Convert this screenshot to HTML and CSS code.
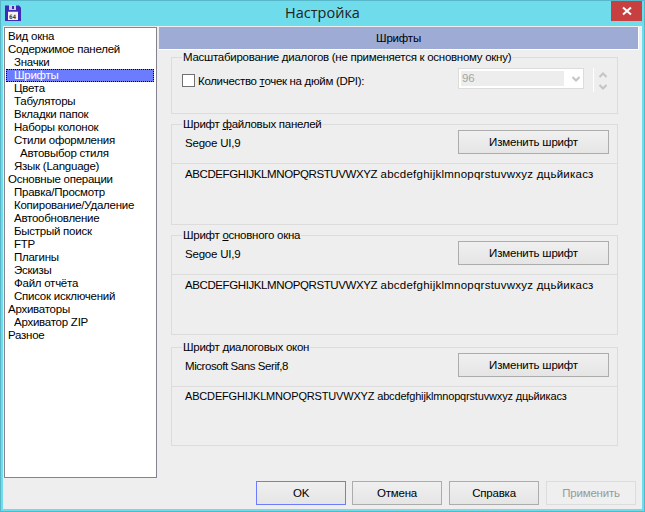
FILE: index.html
```html
<!DOCTYPE html>
<html lang="ru">
<head>
<meta charset="utf-8">
<title>Настройка</title>
<link rel="stylesheet" href="styles.css">
</head>
<body>
<div class="window">
  <div class="titlebar">
    <svg class="appicon" width="16" height="16" viewBox="0 0 16 16">
      <path d="M0 0.5h14l2 2v13.500h-16z" fill="#3d2bb8"/>
      <rect x="4" y="0" width="7" height="5" fill="#c9cbe0"/>
      <rect x="7" y="1" width="2" height="3" fill="#3d2bb8"/>
      <rect x="3" y="6" width="10" height="9" fill="#f4f4f4"/>
      <rect x="3" y="6" width="10" height="1" fill="#b9554e"/>
      <text x="4" y="13.500" class="icontext">64</text>
    </svg>
    <div class="title">Настройка</div>
    <div class="close">
      <svg width="10" height="10" viewBox="0 0 10 10"><path d="M1 1.500l8 7M9 1.500l-8 7" stroke="#fff" stroke-width="2"/></svg>
    </div>
  </div>
  <div class="client">
    <div class="main">
      <ul class="tree">
        <li>Вид окна</li>
        <li>Содержимое панелей</li>
        <li class="l1">Значки</li>
        <li class="l1 sel">Шрифты</li>
        <li class="l1">Цвета</li>
        <li class="l1">Табуляторы</li>
        <li class="l1">Вкладки папок</li>
        <li class="l1">Наборы колонок</li>
        <li class="l1">Стили оформления</li>
        <li class="l2">Автовыбор стиля</li>
        <li class="l1">Язык (Language)</li>
        <li>Основные операции</li>
        <li class="l1">Правка/Просмотр</li>
        <li class="l1">Копирование/Удаление</li>
        <li class="l1">Автообновление</li>
        <li class="l1">Быстрый поиск</li>
        <li class="l1">FTP</li>
        <li class="l1">Плагины</li>
        <li class="l1">Эскизы</li>
        <li class="l1">Файл отчёта</li>
        <li class="l1">Список исключений</li>
        <li>Архиваторы</li>
        <li class="l1">Архиватор ZIP</li>
        <li>Разное</li>
      </ul>
      <div class="panel">
        <div class="header">Шрифты</div>
        <div class="groups">
          <fieldset class="group scale">
            <legend>Масштабирование диалогов (не применяется к основному окну)</legend>
            <div class="dpi">
              <label class="check"><span class="box"></span><span>Количество <u>т</u>очек на дюйм (DPI):</span></label>
              <div class="combo">
                <div class="combo-value">96</div>
                <svg class="chev" width="8" height="6" viewBox="0 0 8 6"><path d="M0.500 1l3.500 3.500L7.500 1" fill="none" stroke="#c4c4c4" stroke-width="2"/></svg>
              </div>
              <div class="spin">
                <svg width="8" height="6" viewBox="0 0 8 6"><path d="M0.500 5l3.500-3.500L7.500 5" fill="none" stroke="#c4c4c4" stroke-width="2"/></svg>
                <svg width="8" height="6" viewBox="0 0 8 6"><path d="M0.500 1l3.500 3.500L7.500 1" fill="none" stroke="#c4c4c4" stroke-width="2"/></svg>
              </div>
            </div>
          </fieldset>
          <fieldset class="group font-a">
            <legend>Шрифт <u>ф</u>айловых панелей</legend>
            <div class="fontrow"><span class="fontname">Segoe UI,9</span><button class="btn change">Изменить шрифт</button></div>
            <div class="sample"><span class="caps">ABCDEFGHIJKLMNOPQRSTUVWXYZ</span> abcdefghijklmnopqrstuvwxyz дцьйикасз</div>
          </fieldset>
          <fieldset class="group font-b">
            <legend>Шрифт <u>о</u>сновного окна</legend>
            <div class="fontrow"><span class="fontname">Segoe UI,9</span><button class="btn change">Изменить шрифт</button></div>
            <div class="sample"><span class="caps">ABCDEFGHIJKLMNOPQRSTUVWXYZ</span> abcdefghijklmnopqrstuvwxyz дцьйикасз</div>
          </fieldset>
          <fieldset class="group font-c">
            <legend>Шрифт <u>д</u>иалоговых окон</legend>
            <div class="fontrow"><span class="fontname narrow">Microsoft Sans Serif,8</span><button class="btn change">Изменить шрифт</button></div>
            <div class="sample small">ABCDEFGHIJKLMNOPQRSTUVWXYZ abcdefghijklmnopqrstuvwxyz дцьйикасз</div>
          </fieldset>
        </div>
      </div>
    </div>
    <div class="actions">
      <button class="btn act default">OK</button>
      <button class="btn act">Отмена</button>
      <button class="btn act">Справка</button>
      <button class="btn act disabled">Применить</button>
    </div>
  </div>
</div>
</body>
</html>
```
FILE: styles.css
```css
* { box-sizing: border-box; }
html, body { margin: 0; padding: 0; }
body { width: 645px; height: 512px; overflow: hidden; font-family: "Liberation Sans", Arial, sans-serif; font-size: 11.500px; letter-spacing: -0.200px; color: #000; }
.window { width: 645px; height: 512px; background: #6fdcec; border: 1px solid #57b6c8; padding: 0 2px 2px 2px; display: flex; flex-direction: column; }
.titlebar { height: 25px; display: flex; align-items: flex-start; position: relative; flex: none; }
.appicon { margin: 4px 0 0 2px; flex: none; }
.icontext { font-family: "DejaVu Sans Mono", monospace; font-size: 6px; font-weight: bold; fill: #333; letter-spacing: 0; }
.title { position: absolute; left: 0; right: 0; top: 3px; text-align: center; font-size: 14.500px; letter-spacing: 0; line-height: 18px; color: #222; font-family: "Open Sans", sans-serif; }
.close { margin-left: auto; margin-right: 0; width: 31px; height: 20px; background: #c7403f; display: flex; align-items: center; justify-content: center; }
.client { flex: 1; background: #eeeeee; display: flex; flex-direction: column; min-height: 0; }
.main { display: flex; height: 452px; flex: none; padding: 1px 0 0 1px; }
.tree { list-style: none; margin: 0; padding: 2px 2px 0 1px; width: 153px; height: 451px; background: #fff; border: 1px solid #85838f; flex: none; letter-spacing: -0.250px; }
.tree li { height: 13px; line-height: 13px; padding-left: 2px; white-space: nowrap; }
.tree li.l1 { padding-left: 8px; }
.tree li.l2 { padding-left: 14px; }
.tree li.sel { background: #6c7cff; color: #fff; outline: 1px dotted #000; outline-offset: -1px; }
.panel { flex: 1; margin-left: 2px; margin-right: 3px; min-width: 0; }
.header { height: 23px; line-height: 22px; background: #9dabd5; text-align: center; border-bottom: 1px solid #fff; border-right: 1px solid #fff; }
.groups { padding: 1px 21px 0 12px; display: flex; flex-direction: column; gap: 4px; }
.group { margin: 0; border: 1px solid #dcdcdc; padding: 0; min-width: 0; }
.group legend { margin-left: 10px; padding: 0 1px; line-height: 13px; height: 13px; letter-spacing: -0.270px; }
.scale { height: 63px; }
.font-a { height: 107px; }
.font-b { height: 106px; }
.font-c { height: 105px; margin-top: 2px; }
.dpi { display: flex; align-items: flex-start; padding: 4px 0 0 10px; }
.check { display: flex; align-items: center; gap: 3px; width: 276px; flex: none; margin-top: 6px; letter-spacing: -0.310px; }
.box { width: 13px; height: 13px; background: #fff; border: 1px solid #707070; flex: none; }
.combo { width: 126px; height: 21px; background: #fff; border: 1px solid #dcdcdc; display: flex; align-items: center; padding: 2px; flex: none; }
.combo-value { width: 103px; height: 15px; background: #ededed; color: #a5a5a5; line-height: 15px; padding-left: 1px; }
.chev { margin-left: 8px; }
.spin { margin-left: 9px; padding: 4px 0 0 5px; height: 24px; border-left: 1px solid #fff; display: flex; flex-direction: column; gap: 6px; }
.spin svg { display: block; }
.fontrow { height: 34px; margin-top: -1px; display: flex; justify-content: space-between; align-items: flex-start; padding: 0 8px 0 13px; border-bottom: 1px solid #dcdcdc; }
.fontname { margin-top: 6px; line-height: 14px; }
.fontname.narrow { letter-spacing: -0.430px; }
.sample { padding: 3px 0 0 13px; white-space: nowrap; line-height: 14px; letter-spacing: 0.240px; }
.caps { letter-spacing: -0.400px; }
.sample.small { font-size: 11px; letter-spacing: -0.170px; padding-top: 2px; }
.btn { font: inherit; letter-spacing: inherit; height: 24px; background: linear-gradient(#f0f0f0, #e5e5e5); border: 1px solid #acacac; color: #000; padding: 0; }
.change { width: 151px; }
.actions { display: flex; justify-content: flex-end; gap: 7px; padding: 3px 6px 0 0; }
.act { width: 90px; }
.default { border-color: #6c7cff; margin-right: -1px; }
.disabled { background: #efefef; border-color: #dcdcdc; color: #999; }
```
